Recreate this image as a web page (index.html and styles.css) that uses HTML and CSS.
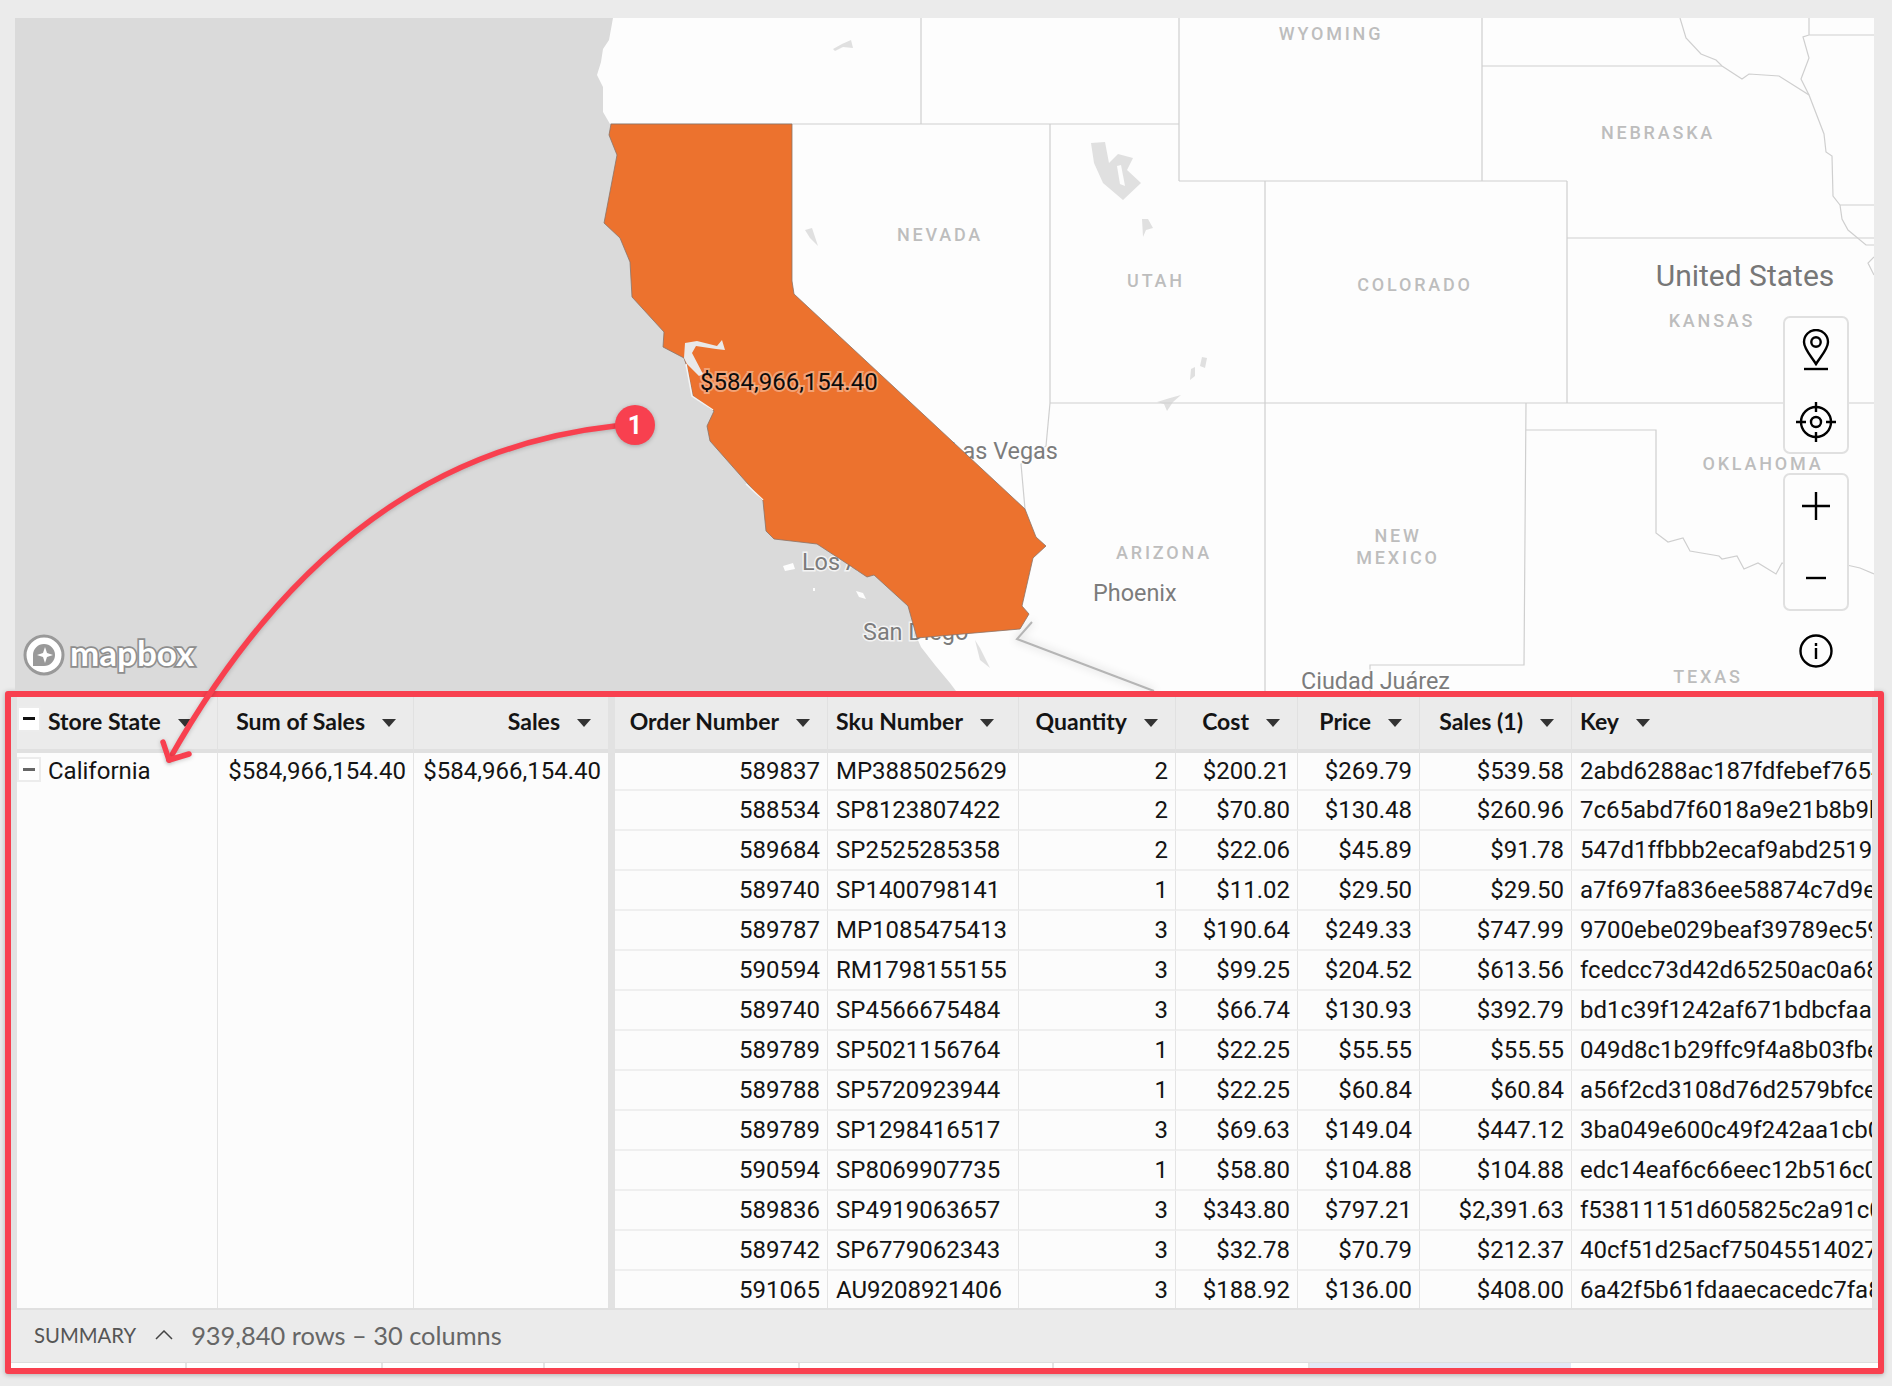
FILE: index.html
```html
<!DOCTYPE html>
<html lang="en">
<head>
  <meta charset="UTF-8">
  <title>Store sales by state</title>
  <link rel="stylesheet" href="styles.css">
</head>
<body>

  <!-- Map -->
  <section class="map">
    <svg class="map-svg" viewBox="15 18 1859 673">
      <rect class="ocean" x="15" y="18" width="1859" height="673"/>
      <polygon class="land" points="613,18 609,40 603,49 601,62 597,75 603,87 603,112 610,124 792,124 792,281 794,294 900,400 917,638 921,647 935,665 950,683 956,691 1874,691 1874,18"/>

      <!-- lakes and islands -->
      <g class="lake">
        <polygon points="833,49 842,44 851,40 853,48 843,47 835,51"/>
        <polygon points="805,230 812,228 818,246 810,238"/>
        <polygon points="1091,143 1105,142 1109,163 1118,154 1133,158 1127,170 1141,183 1123,200 1103,183 1094,163"/>
        <polygon points="1142,219 1148,219 1153,228 1146,230 1143,237"/>
        <polygon points="1157,402 1170,398 1181,395 1173,402 1167,411 1164,404"/>
        <polygon points="1202,357 1207,358 1205,368 1200,366"/>
        <polygon points="1191,369 1195,367 1195,376 1190,380"/>
        <polygon points="975,640 980,648 990,668 980,660"/>
      </g>
      <g class="islet">
        <polygon points="783,566 793,563 795,569 785,571"/>
        <polygon points="856,591 863,593 866,599 859,597"/>
        <polygon points="813,588 815,588 815,591 813,591"/>
        <polygon points="1117,166 1121,165 1125,186 1120,184"/>
      </g>

      <!-- borders -->
      <g class="border">
        <path d="M921 18V124M610 124H1179M1179 18V181M1050 124V403M1179 181H1567M1265 181V691M1482 18V181M1482 66H1722"/>
        <path d="M1567 181V403M1567 238H1874M1050 403H1874"/>
        <path d="M1526 403L1524 665H1370V691"/>
        <path d="M1526 430H1656V533L1668 542 1683 538 1690 551 1719 556 1722 559 1737 556 1744 569 1758 563 1776 574 1782 563 1800 570 1838 563 1860 568 1874 574"/>
        <path d="M1050 403L1046 446 1021 464 1025 509"/>
        <path d="M1680 18L1686 38 1701 54 1716 60 1722 66 1742 79 1749 74 1779 76 1809 95 1824 134 1826 152 1832 156 1833 196 1840 205H1874M1840 205L1842 219 1848 230 1866 245H1874M1874 257L1868 263 1874 275"/>
        <path d="M1809 18V35H1874M1809 35L1803 37 1809 58 1801 79 1809 95"/>
      </g>
      <path class="border-mex" d="M1032 622L1017 639 1154 691"/>

      <!-- places -->
      <g class="state">
        <text x="1331" y="40">WYOMING</text>
        <text x="1658" y="139">NEBRASKA</text>
        <text x="940" y="241">NEVADA</text>
        <text x="1156" y="287">UTAH</text>
        <text x="1415" y="291">COLORADO</text>
        <text x="1712" y="327">KANSAS</text>
        <text x="1763" y="470">OKLAHOMA</text>
        <text x="1164" y="559">ARIZONA</text>
        <text x="1398" y="542">NEW</text>
        <text x="1398" y="564">MEXICO</text>
        <text x="1708" y="683">TEXAS</text>
      </g>
      <text class="country" x="1745" y="286">United States</text>
      <g class="city">
        <text x="950" y="459">Las Vegas</text>
        <text x="1093" y="601">Phoenix</text>
        <text x="1301" y="689">Ciudad Juárez</text>
        <text x="802" y="570">Los Angeles</text>
        <text x="863" y="640">San Diego</text>
      </g>

      <!-- California -->
      <polygon class="region" points="611,124 609,135 617,155 604,223 620,238 630,262 632,297 664,332 663,347 684,358 687,367 693,396 714,411 707,426 710,441 763,501 766,531 774,539 817,544 843,561 867,577 874,575 908,606 917,638 1020,629 1029,614 1022,606 1033,558 1046,546 1036,537 1025,509 794,294 792,281 792,124"/>
      <polygon class="bay" points="685,343 697,341 717,346 722,340 725,350 716,349 696,346 692,353 703,374 699,376 687,364 684,358"/>
      <path class="shore" d="M686 364L692 396 713 410M746 484L763 500"/>
      <text class="value" x="700" y="390">$584,966,154.40</text>

      <!-- mapbox mark -->
      <circle class="logo-ring" cx="44" cy="655" r="19"/>
      <path class="logo-drop" d="M33 655a11 11 0 1 1 11 11h-11zM45 647l-2 6-6 2 6 2 2 6 2-6 6-2-6-2z"/>
      <text class="logo-word" x="70" y="666">mapbox</text>
    </svg>

    <!-- Map controls -->
    <div class="controls">
      <div class="ctl-group">
        <button class="ctl">
          <svg class="icon-pin" viewBox="0 0 28 42"><path d="M14 35C9 27 2 20 2 13a12 12 0 0 1 24 0C26 20 19 27 14 35z"/><circle cx="14" cy="13" r="4.7"/><path d="M2 40H26"/></svg>
        </button>
        <button class="ctl">
          <svg class="icon-target" viewBox="0 0 42 42"><circle cx="21" cy="21" r="15"/><circle cx="21" cy="21" r="5"/><path d="M21 1V11M21 31V41M1 21H11M31 21H41"/></svg>
        </button>
      </div>
      <div class="ctl-group">
        <button class="ctl">
          <svg class="icon-plus" viewBox="0 0 30 30"><path d="M15 1V29M1 15H29"/></svg>
        </button>
        <button class="ctl">
          <svg class="icon-minus" viewBox="0 0 30 30"><path d="M5 15H25"/></svg>
        </button>
      </div>
      <button class="ctl ctl-info">
        <svg class="icon-info" viewBox="0 0 34 34"><circle cx="17" cy="17" r="15.5"/><path d="M17 14V25M17 9V12"/></svg>
      </button>
    </div>
  </section>

  <!-- Table -->
  <section class="frame">
    <div class="tables">
      <table class="data grouped">
        <colgroup><col class="g1"><col class="g2"><col class="g3"></colgroup>
        <thead>
          <tr>
            <th class="left"><span class="toggle head-toggle"></span>Store State<i class="caret"></i></th>
            <th class="right">Sum of Sales<i class="caret"></i></th>
            <th class="right">Sales<i class="caret"></i></th>
          </tr>
        </thead>
        <tbody>
          <tr class="first">
            <td class="left"><span class="toggle"></span>California</td>
            <td class="right">$584,966,154.40</td>
            <td class="right">$584,966,154.40</td>
          </tr>
          <tr class="filler"><td></td><td></td><td></td></tr>
        </tbody>
      </table>

      <table class="data detail">
        <colgroup><col class="d1"><col class="d2"><col class="d3"><col class="d4"><col class="d5"><col class="d6"><col class="d7"></colgroup>
        <thead>
          <tr>
            <th class="right">Order Number<i class="caret"></i></th>
            <th class="left">Sku Number<i class="caret"></i></th>
            <th class="right">Quantity<i class="caret"></i></th>
            <th class="right">Cost<i class="caret"></i></th>
            <th class="right">Price<i class="caret"></i></th>
            <th class="right">Sales (1)<i class="caret"></i></th>
            <th class="left">Key<i class="caret"></i></th>
          </tr>
        </thead>
        <tbody>
          <tr class="first"><td class="right">589837</td><td>MP3885025629</td><td class="right">2</td><td class="right">$200.21</td><td class="right">$269.79</td><td class="right">$539.58</td><td>2abd6288ac187fdfebef7654a</td></tr>
          <tr><td class="right">588534</td><td>SP8123807422</td><td class="right">2</td><td class="right">$70.80</td><td class="right">$130.48</td><td class="right">$260.96</td><td>7c65abd7f6018a9e21b8b9b1a</td></tr>
          <tr><td class="right">589684</td><td>SP2525285358</td><td class="right">2</td><td class="right">$22.06</td><td class="right">$45.89</td><td class="right">$91.78</td><td>547d1ffbbb2ecaf9abd2519e0</td></tr>
          <tr><td class="right">589740</td><td>SP1400798141</td><td class="right">1</td><td class="right">$11.02</td><td class="right">$29.50</td><td class="right">$29.50</td><td>a7f697fa836ee58874c7d9e2b</td></tr>
          <tr><td class="right">589787</td><td>MP1085475413</td><td class="right">3</td><td class="right">$190.64</td><td class="right">$249.33</td><td class="right">$747.99</td><td>9700ebe029beaf39789ec59a1</td></tr>
          <tr><td class="right">590594</td><td>RM1798155155</td><td class="right">3</td><td class="right">$99.25</td><td class="right">$204.52</td><td class="right">$613.56</td><td>fcedcc73d42d65250ac0a68e1</td></tr>
          <tr><td class="right">589740</td><td>SP4566675484</td><td class="right">3</td><td class="right">$66.74</td><td class="right">$130.93</td><td class="right">$392.79</td><td>bd1c39f1242af671bdbcfaa07</td></tr>
          <tr><td class="right">589789</td><td>SP5021156764</td><td class="right">1</td><td class="right">$22.25</td><td class="right">$55.55</td><td class="right">$55.55</td><td>049d8c1b29ffc9f4a8b03fbe2</td></tr>
          <tr><td class="right">589788</td><td>SP5720923944</td><td class="right">1</td><td class="right">$22.25</td><td class="right">$60.84</td><td class="right">$60.84</td><td>a56f2cd3108d76d2579bfce41</td></tr>
          <tr><td class="right">589789</td><td>SP1298416517</td><td class="right">3</td><td class="right">$69.63</td><td class="right">$149.04</td><td class="right">$447.12</td><td>3ba049e600c49f242aa1cb0d7</td></tr>
          <tr><td class="right">590594</td><td>SP8069907735</td><td class="right">1</td><td class="right">$58.80</td><td class="right">$104.88</td><td class="right">$104.88</td><td>edc14eaf6c66eec12b516c0f3</td></tr>
          <tr><td class="right">589836</td><td>SP4919063657</td><td class="right">3</td><td class="right">$343.80</td><td class="right">$797.21</td><td class="right">$2,391.63</td><td>f53811151d605825c2a91c0e8</td></tr>
          <tr><td class="right">589742</td><td>SP6779062343</td><td class="right">3</td><td class="right">$32.78</td><td class="right">$70.79</td><td class="right">$212.37</td><td>40cf51d25acf750455140279a</td></tr>
          <tr class="last"><td class="right">591065</td><td>AU9208921406</td><td class="right">3</td><td class="right">$188.92</td><td class="right">$136.00</td><td class="right">$408.00</td><td>6a42f5b61fdaaecacedc7fa8b</td></tr>
        </tbody>
      </table>
    </div>

    <div class="summary">
      <span class="summary-label">SUMMARY</span>
      <svg class="chevron" viewBox="0 0 18 10"><path d="M1 9L9 1L17 9"/></svg>
      <span class="summary-count">939,840 rows – 30 columns</span>
    </div>

    <div class="tabs">
      <div class="tab t1"></div>
      <div class="tab t2"></div>
      <div class="tab t3"></div>
      <div class="tab t4"></div>
      <div class="tab t5"></div>
      <div class="tab t6"></div>
      <div class="tab t7 active"></div>
      <div class="tab t8"></div>
    </div>
  </section>

  <!-- Annotation over the page -->
  <svg class="note" viewBox="0 0 1892 1386">
    <path class="note-line" d="M615 426C440 445 290 545 169 760"/>
    <path class="note-line" d="M163 742L169 760L189 754"/>
    <circle class="note-dot" cx="635" cy="425" r="20"/>
    <text class="note-num" x="635" y="434">1</text>
  </svg>

</body>
</html>
```

FILE: styles.css
```css
body {
  font-family: Roboto, Arial, sans-serif;
  background-color: #ebebeb;
  margin: 0;
  width: 1892px;
  height: 1386px;
  position: relative;
  overflow: hidden;
}

/* map */

.map {
  position: relative;
  margin: 18px 18px 0 15px;
  height: 673px;
}

.map-svg {
  display: block;
  width: 100%;
  height: 100%;
}

.ocean { fill: #dadada; }
.land { fill: #fdfdfd; }
.lake { fill: #e0e0e0; }
.islet { fill: #fdfdfd; }

.border {
  fill: none;
  stroke: #cfcfcf;
  stroke-width: 1.2;
}

.border-mex {
  fill: none;
  stroke: #b5b5b5;
  stroke-width: 2;
  filter: drop-shadow(0 0 4px #c4c4c4);
}

.state text {
  fill: #bdbdbd;
  font-size: 18px;
  font-weight: 500;
  letter-spacing: 2.8px;
  text-anchor: middle;
}

.country {
  fill: #777;
  font-size: 30px;
  text-anchor: middle;
}

.city text {
  fill: #7c7c7c;
  font-size: 23.4px;
  paint-order: stroke;
  stroke: rgba(255, 255, 255, 0.7);
  stroke-width: 3px;
}

.region {
  fill: #ec722e;
  stroke: #8a7468;
  stroke-width: 0.8;
}

.bay { fill: #e9e9e9; }

.shore {
  fill: none;
  stroke: #f4f4f4;
  stroke-width: 1.5;
}

.value {
  fill: #0c0c0c;
  font-size: 24px;
  paint-order: stroke;
  stroke: rgba(255, 255, 255, 0.35);
  stroke-width: 4px;
}

.logo-ring {
  fill: #fff;
  stroke: #999;
  stroke-width: 3;
}

.logo-drop { fill: #999; fill-rule: evenodd; }

.logo-word {
  fill: #fff;
  font-family: Lato, sans-serif;
  font-size: 35px;
  font-weight: 700;
  paint-order: stroke;
  stroke: #8e8e8e;
  stroke-width: 3.5px;
}

/* map controls */

.controls {
  position: absolute;
  top: 298px;
  right: 25px;
  display: flex;
  flex-direction: column;
  width: 66px;
}

.ctl-group {
  display: flex;
  flex-direction: column;
  background-color: #fdfdfd;
  border: 2px solid #e0e0e0;
  border-radius: 7px;
  margin-bottom: 19px;
  box-sizing: border-box;
  height: 138px;
}

.ctl-group + .ctl { margin-top: -1px; }

.ctl {
  flex: 1;
  display: flex;
  align-items: center;
  justify-content: center;
  background: none;
  border: 0;
  padding: 0;
}

.ctl svg {
  fill: none;
  stroke: #000;
  stroke-width: 2.4;
}

.icon-pin { width: 28px; height: 42px; margin-bottom: 4px; }
.icon-target { width: 42px; height: 42px; margin-top: 6px; }
.icon-plus { width: 30px; height: 30px; margin-bottom: 6px; }
.icon-minus { width: 30px; height: 30px; margin-top: 4px; }
.icon-info { width: 34px; height: 34px; }

.ctl-info {
  flex: none;
  height: 44px;
}

/* table */

.frame {
  margin: 0 8px 0 5px;
  height: 683px;
  box-sizing: border-box;
  border: 6px solid #f8404f;
  border-radius: 3px;
  background-color: #ebebeb;
  box-shadow: 0 1px 5px rgba(0, 0, 0, 0.25);
}

.tables {
  display: flex;
  height: 611px;
  gap: 7px;
  padding-left: 6px;
  background-color: #e2e2e2;
  overflow: hidden;
}

.data {
  table-layout: fixed;
  border-collapse: separate;
  border-spacing: 0;
  height: 611px;
  font-size: 24px;
  color: #141414;
}

.grouped { width: 591px; flex: none; }
.detail { width: 1257px; flex: none; }

.g1 { width: 201px; }
.g2 { width: 196px; }
.g3 { width: 194px; }
.d1 { width: 213px; }
.d2 { width: 191px; }
.d3 { width: 157px; }
.d4 { width: 122px; }
.d5 { width: 122px; }
.d6 { width: 152px; }
.d7 { width: 300px; }

.data th {
  height: 56px;
  box-sizing: border-box;
  padding: 0 17px 5px 8px;
  background-color: #ebebeb;
  border-right: 1px solid #e1e1e1;
  border-bottom: 4px solid #e0e0e0;
  font-family: Lato, sans-serif;
  font-size: 23px;
  font-weight: 700;
  white-space: nowrap;
  overflow: hidden;
}

.data td {
  height: 40px;
  box-sizing: border-box;
  padding: 0 7px 0 8px;
  background-color: #fcfcfc;
  border-right: 1px solid #e4e4e4;
  border-bottom: 2px solid #efefef;
  white-space: nowrap;
  overflow: hidden;
}

.data tr.first td { height: 38px; }
.data tr.last td { height: 37px; border-bottom: 0; }

.grouped td { border-bottom: 0; padding-bottom: 2px; }
.grouped tr.filler td { height: auto; padding: 0; }

.data th:last-child, .data td:last-child { border-right: 0; }
.detail td:last-child { padding-right: 0; }

.left { text-align: left; }
.right { text-align: right; }

.grouped th.left, .grouped td.left { padding-left: 31px; position: relative; }

.caret {
  display: inline-block;
  width: 0;
  height: 0;
  margin-left: 17px;
  vertical-align: 3px;
  border-left: 7px solid transparent;
  border-right: 7px solid transparent;
  border-top: 8px solid #333;
}

.toggle {
  position: absolute;
  left: 0;
  top: 4px;
  width: 24px;
  height: 25px;
  box-sizing: border-box;
  background-color: #fff;
  border: 2px solid #ececec;
}

.toggle::before {
  content: "";
  position: absolute;
  left: 4px;
  right: 4px;
  top: 9px;
  height: 3px;
  background-color: #666;
}

.head-toggle { top: 9px; height: 26px; }
.head-toggle::before { background-color: #111; }

/* footer */

.summary {
  display: flex;
  align-items: center;
  height: 54px;
  box-sizing: border-box;
  border-top: 2px solid #e0e0e0;
  padding: 0 0 2px 23px;
  font-family: Lato, sans-serif;
  color: #666;
}

.summary-label { font-size: 20.3px; color: #555; }

.chevron {
  width: 18px;
  height: 10px;
  margin: 0 18px 0 19px;
  fill: none;
  stroke: #444;
  stroke-width: 1.5;
}

.summary-count { font-size: 25.4px; }

.tabs {
  display: flex;
  height: 6px;
  background-color: #fff;
  border-top: 1px solid #ddd;
  box-sizing: border-box;
}

.tab { background-color: #fff; border-right: 2px solid #e4e4e4; box-sizing: border-box; }
.t1 { width: 176px; }
.t2 { width: 196px; }
.t3 { width: 162px; }
.t4 { width: 255px; }
.t5 { width: 254px; }
.t6 { width: 256px; }
.t7 { width: 261px; }
.t8 { flex: 1; border-right: 0; }
.tab.active { background-color: #e3e8f5; border-right: 0; }

/* annotation */

.note {
  position: absolute;
  left: 0;
  top: 0;
  width: 1892px;
  height: 1386px;
  pointer-events: none;
}

.note-line {
  fill: none;
  stroke: #f8404f;
  stroke-width: 5.5;
  stroke-linecap: round;
  stroke-linejoin: round;
  filter: drop-shadow(0 1px 2px rgba(0, 0, 0, 0.2));
}

.note-dot {
  fill: #f8404f;
  filter: drop-shadow(0 1px 2px rgba(0, 0, 0, 0.25));
}

.note-num {
  fill: #fff;
  font-size: 25px;
  font-weight: 700;
  text-anchor: middle;
}
```
